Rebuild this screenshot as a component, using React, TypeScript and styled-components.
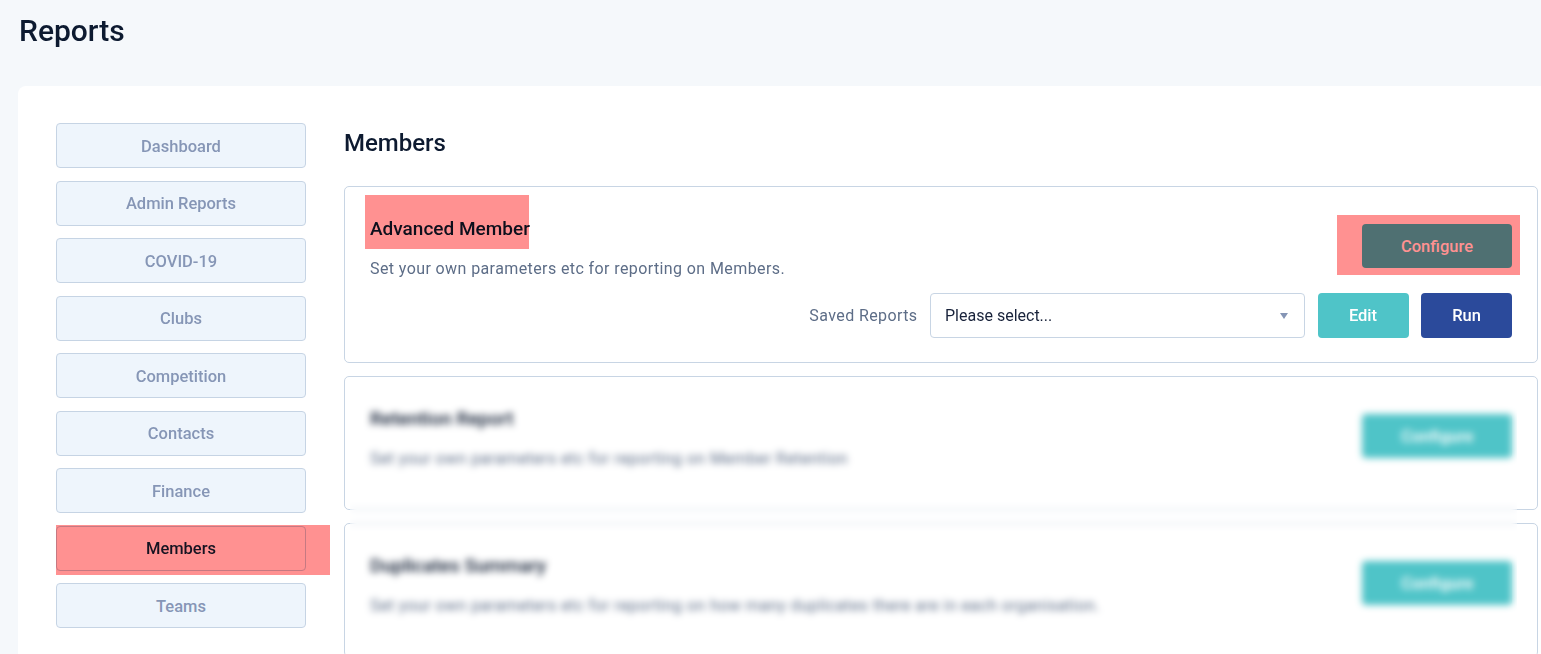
import styled, { createGlobalStyle } from "styled-components";

const GlobalStyle = createGlobalStyle`
  body {
    margin: 0;
    background: #f5f8fb;
    font-family: Roboto, "Liberation Sans", sans-serif;
    color: #0e1b31;
  }
`;

type Inset = { $top: number; $right: number; $bottom: number; $left: number };

const navItems = ["Dashboard", "Admin Reports", "COVID-19", "Clubs", "Competition", "Contacts", "Finance", "Members", "Teams"];

const reports = [
  { title: "Retention Report", desc: "Set your own parameters etc for reporting on Member Retention" },
  { title: "Duplicates Summary", desc: "Set your own parameters etc for reporting on how many duplicates there are in each organisation." },
];

export default function App() {
  return (
    <>
      <GlobalStyle />
      <Header>
        <PageTitle>Reports</PageTitle>
      </Header>
      <Panel>
        <Sidebar>
          {navItems.map(it => (
            <NavButton key={it} $active={it === "Members"}>
              {it}
              {it === "Members" && <Highlight $top={-2} $right={-25} $bottom={-5} $left={-1} />}
            </NavButton>
          ))}
        </Sidebar>
        <Main>
          <SectionTitle>Members</SectionTitle>
          <Card>
            <CardTop>
              <Info>
                <CardTitle>
                  Advanced Member
                  <Highlight $top={-22} $right={1} $bottom={-8} $left={-5} />
                </CardTitle>
                <CardDesc>Set your own parameters etc for reporting on Members.</CardDesc>
              </Info>
              <ConfigureWrap>
                <ConfigureButton>Configure</ConfigureButton>
                <Highlight $top={-9} $right={-8} $bottom={-7} $left={-25} />
              </ConfigureWrap>
            </CardTop>
            <Actions>
              <SavedLabel>Saved Reports</SavedLabel>
              <Select>
                <span>Please select...</span>
                <Caret />
              </Select>
              <ActionButton $color="#4fc4c8">Edit</ActionButton>
              <ActionButton $color="#2b4a9b">Run</ActionButton>
            </Actions>
          </Card>
          <Locked>
            {reports.map(r => (
              <Card key={r.title} $loose>
                <CardTop>
                  <Info>
                    <CardTitle>{r.title}</CardTitle>
                    <CardDesc>{r.desc}</CardDesc>
                  </Info>
                  <ConfigureWrap>
                    <ConfigureButton>Configure</ConfigureButton>
                  </ConfigureWrap>
                </CardTop>
              </Card>
            ))}
            <Frost />
          </Locked>
        </Main>
      </Panel>
    </>
  );
}

const Header = styled.header`
  height: 86px;
  box-sizing: border-box;
  padding: 13px 19px 0;
`;

const PageTitle = styled.h1`
  margin: 0;
  font: 500 30px/36px Roboto, sans-serif;
  color: #0d1a30;
`;

const Panel = styled.div`
  margin-left: 18px;
  background: #fff;
  border-top-left-radius: 8px;
  padding: 37px 3px 0 38px;
  display: grid;
  grid-template-columns: 250px 1fr;
  column-gap: 38px;
  min-height: 600px;
`;

const Sidebar = styled.nav`
  display: flex;
  flex-direction: column;
  gap: 12.5px;
`;

const NavButton = styled.button<{ $active?: boolean }>`
  position: relative;
  height: 45px;
  box-sizing: border-box;
  padding-top: 2px;
  border: 1px solid #c6d4e4;
  border-radius: 4px;
  background: ${p => (p.$active ? "#fff" : "#eef5fc")};
  color: ${p => (p.$active ? "#16213a" : "#8696b6")};
  font: 500 16.5px Roboto, sans-serif;
  cursor: pointer;
`;

const Highlight = styled.span<Inset>`
  position: absolute;
  top: ${p => p.$top}px;
  right: ${p => p.$right}px;
  bottom: ${p => p.$bottom}px;
  left: ${p => p.$left}px;
  background: #ff9191;
  mix-blend-mode: multiply;
  pointer-events: none;
`;

const Main = styled.main`
  display: flex;
  flex-direction: column;
  min-width: 0;
`;

const SectionTitle = styled.h2`
  margin: 1px 0 24px;
  font: 500 24px/38px Roboto, sans-serif;
  color: #0d1a30;
`;

const Card = styled.section<{ $loose?: boolean }>`
  border: 1px solid #c8d5e4;
  border-radius: 5px;
  background: #fff;
  padding: 30px 25px ${p => (p.$loose ? "40px" : "24px")};
  display: flex;
  flex-direction: column;
  gap: 14px;
  margin-bottom: 13px;
`;

const CardTop = styled.div`
  display: flex;
  justify-content: space-between;
  align-items: center;
`;

const Info = styled.div`
  display: flex;
  flex-direction: column;
  align-items: flex-start;
  gap: 18px;
`;

const CardTitle = styled.h3`
  position: relative;
  margin: 0;
  font: 500 19px/24px Roboto, sans-serif;
  color: #0d1a30;
`;

const CardDesc = styled.p`
  margin: 0;
  font: 400 16px/20px Roboto, sans-serif;
  letter-spacing: 0.4px;
  color: #5d6d87;
`;

const ConfigureWrap = styled.div`
  position: relative;
  display: flex;
  margin-bottom: 4px;
`;

const ConfigureButton = styled.button`
  width: 150px;
  height: 44px;
  border: none;
  border-radius: 4px;
  background: #4fc4c8;
  color: #fff;
  font: 500 16.5px Roboto, sans-serif;
`;

const Actions = styled.div`
  display: flex;
  justify-content: flex-end;
  align-items: center;
  gap: 12.5px;
`;

const SavedLabel = styled.span`
  font: 400 16px Roboto, sans-serif;
  letter-spacing: 0.4px;
  color: #5d6d87;
`;

const Select = styled.div`
  width: 375px;
  height: 45px;
  box-sizing: border-box;
  border: 1px solid #c8d5e4;
  border-radius: 4px;
  padding: 0 16px 0 14px;
  display: flex;
  align-items: center;
  justify-content: space-between;
  font: 400 16px Roboto, sans-serif;
  color: #18223a;
`;

const Caret = styled.span`
  width: 0;
  height: 0;
  border-left: 4.5px solid transparent;
  border-right: 4.5px solid transparent;
  border-top: 6px solid #8595b5;
`;

const ActionButton = styled.button<{ $color: string }>`
  width: 91px;
  height: 45px;
  border: none;
  border-radius: 4px;
  background: ${p => p.$color};
  color: #fff;
  font: 500 16.5px Roboto, sans-serif;
`;

const Locked = styled.div`
  position: relative;
`;

const Frost = styled.div`
  position: absolute;
  top: 3px;
  left: 6px;
  right: 21px;
  bottom: 0;
  backdrop-filter: blur(3.5px);
  pointer-events: none;
`;
